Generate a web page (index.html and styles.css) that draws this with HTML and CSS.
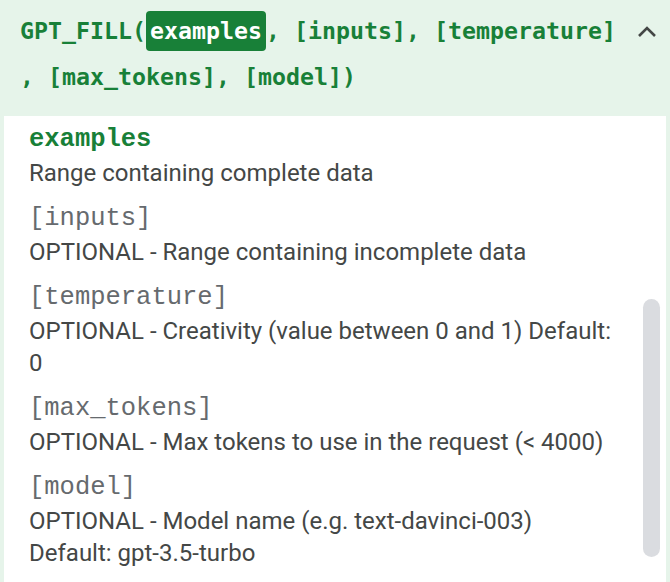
FILE: index.html
```html
<!DOCTYPE html>
<html>
<head>
<meta charset="utf-8">
<link rel="stylesheet" href="styles.css">
</head>
<body>
<div class="panel">
  <div class="header">
    <div class="signature">GPT_FILL(<span class="active">examples</span>, [inputs], [temperature] , [max_tokens], [model])</div>
    <div class="toggle">
      <svg width="20" height="14" viewBox="0 0 20 14"><polyline points="2,12 10,4 18,12" fill="none" stroke="#444746" stroke-width="2.6"/></svg>
    </div>
  </div>
  <div class="card">
    <div class="content">
      <div class="param">
        <div class="name current">examples</div>
        <div class="desc">Range containing complete data</div>
      </div>
      <div class="param">
        <div class="name">[inputs]</div>
        <div class="desc">OPTIONAL - Range containing incomplete data</div>
      </div>
      <div class="param">
        <div class="name">[temperature]</div>
        <div class="desc">OPTIONAL - Creativity (value between 0 and 1) Default: 0</div>
      </div>
      <div class="param">
        <div class="name">[max_tokens]</div>
        <div class="desc">OPTIONAL - Max tokens to use in the request (&lt; 4000)</div>
      </div>
      <div class="param">
        <div class="name">[model]</div>
        <div class="desc">OPTIONAL - Model name (e.g. text-davinci-003) Default: gpt-3.5-turbo</div>
      </div>
    </div>
    <div class="track"><div class="thumb"></div></div>
  </div>
</div>
</body>
</html>
```

FILE: styles.css
```css
html, body {
  margin: 0;
  padding: 0;
  background: #e6f4ea;
  width: 670px;
  height: 582px;
  overflow: hidden;
}
.panel {
  display: flex;
  flex-direction: column;
  height: 582px;
}
.header {
  display: flex;
  align-items: flex-start;
  padding: 8px 0 16px 20px;
}
.signature {
  width: 610px;
  font-family: "DejaVu Sans Mono", monospace;
  font-weight: bold;
  font-size: 23.25px;
  line-height: 46px;
  color: #188038;
}
.active {
  display: inline-block;
  background: #188038;
  color: #ffffff;
  border-radius: 4px;
  padding: 0 4px;
  line-height: 40px;
}
.toggle {
  margin-left: 7px;
  margin-top: 16px;
  width: 20px;
  height: 14px;
}
.toggle svg {
  display: block;
}
.card {
  flex: 1;
  margin: 0 4px 0 4px;
  background: #ffffff;
  display: flex;
}
.content {
  width: 586px;
  padding: 7px 4px 0 25px;
}
.param {
  margin-bottom: 13px;
}
.name {
  font-family: "Liberation Mono", "Courier New", monospace;
  font-size: 25.5px;
  line-height: 34px;
  color: #666a6e;
}
.name.current {
  color: #188038;
  font-weight: bold;
}
.desc {
  font-family: Roboto, "Liberation Sans", sans-serif;
  font-size: 24px;
  line-height: 32px;
  color: #444746;
}
.track {
  margin-left: 24px;
  width: 17px;
  padding-top: 183px;
}
.thumb {
  width: 17px;
  height: 258px;
  border-radius: 9px;
  background: #dadce0;
}
```
